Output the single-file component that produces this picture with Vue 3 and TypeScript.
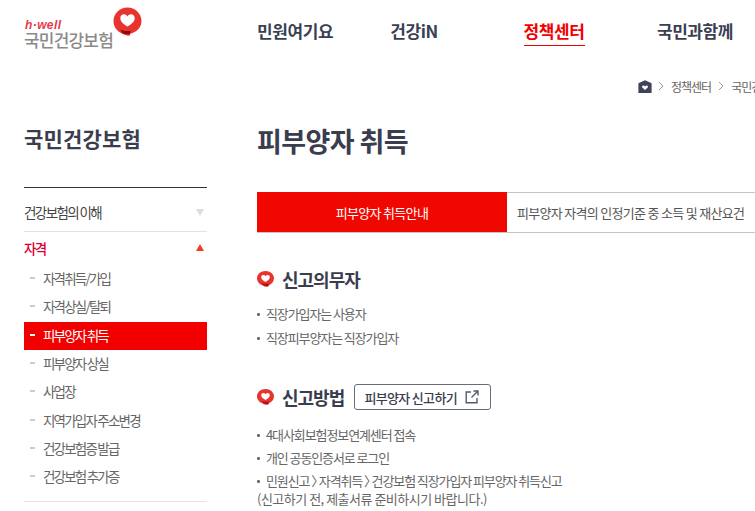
<script setup lang="ts">
const nav = [
  { label: '민원여기요', active: false },
  { label: '건강iN', active: false },
  { label: '정책센터', active: true },
  { label: '국민과함께', active: false },
]
const subs = [
  { label: '자격취득/가입', active: false },
  { label: '자격상실/탈퇴', active: false },
  { label: '피부양자 취득', active: true },
  { label: '피부양자 상실', active: false },
  { label: '사업장', active: false },
  { label: '지역가입자 주소변경', active: false },
  { label: '건강보험증 발급', active: false },
  { label: '건강보험 추가증', active: false },
]
const duty = ['직장가입자는 사용자', '직장피부양자는 직장가입자']
const how = ['4대사회보험정보연계센터 접속', '개인 공동인증서로 로그인']
</script>

<template>
  <div class="page">
    <header class="header">
      <div class="logo">
        <div class="logo-words">
          <span class="logo-en">h·well</span>
          <span class="logo-ko">국민건강보험</span>
        </div>
        <svg class="logo-mark" width="29" height="29" viewBox="0 0 29 29">
          <path d="M14.5 .5C6.800 .5.500 6.500.500 14c0 5.500 3.200 10 8 12.300 2 1.500 6 2.500 8.300 2.300l.3-1.900C23.700 25.500 28.500 20.500 28.500 14 28.500 6.500 22.200 .5 14.500 .5Z" fill="#e8342f"/>
          <path d="M7.500 22.500c3 1.500 6.500 1.800 10 1.300l-.4 3.400c-2.700.2-5.300-.1-8.100-1.300Z" fill="#8f0a0a"/>
          <path d="M14.500 19.500c-3.200-2-7.200-4.500-7.200-8.300 0-2.300 1.700-3.900 3.700-3.900 1.500 0 2.700.8 3.500 2.100.8-1.300 2-2.100 3.500-2.100 2 0 3.700 1.600 3.700 3.900 0 3.800-4 6.300-7.200 8.300Z" fill="#fff"/>
        </svg>
      </div>
      <nav class="nav">
        <div v-for="n in nav" :key="n.label" class="nav-item">
          <span class="nav-label" :class="{ on: n.active }">{{ n.label }}</span>
        </div>
      </nav>
    </header>

    <div class="crumbs">
      <svg class="home" width="14" height="13" viewBox="0 0 14 13">
        <path d="M7 .3 13.600 3.300V13H.4V3.300Z" fill="#3f4357"/>
        <path d="M7 10 4.300 7.600c-.8-1 0-2.200 1.100-2.100.7 0 1.200.4 1.600 1 .4-.6.900-1 1.600-1 1.100-.1 1.900 1.100 1.100 2.100Z" fill="#fff"/>
      </svg>
      <svg class="chev" width="6" height="10" viewBox="0 0 6 10"><path d="M1 1l4 4-4 4" fill="none" stroke="#999" /></svg>
      <span class="crumb">정책센터</span>
      <svg class="chev" width="6" height="10" viewBox="0 0 6 10"><path d="M1 1l4 4-4 4" fill="none" stroke="#999" /></svg>
      <span class="crumb">국민건강보험</span>
    </div>

    <div class="body">
      <aside class="side">
        <h2 class="side-title">국민건강보험</h2>
        <div class="menu-row first">
          <span>건강보험의 이해</span>
          <i class="tri down"></i>
        </div>
        <div class="menu-row open">
          <span>자격</span>
          <i class="tri up"></i>
        </div>
        <ul class="subs">
          <li v-for="s in subs" :key="s.label" class="sub" :class="{ on: s.active }">
            <i class="dash"></i><span>{{ s.label }}</span>
          </li>
        </ul>
      </aside>

      <main class="main">
        <h1 class="title">피부양자 취득</h1>
        <div class="tabs">
          <div class="tab on">피부양자 취득안내</div>
          <div class="tab">피부양자 자격의 인정기준 중 소득 및 재산요건</div>
        </div>

        <section class="sec duty">
          <div class="sec-head">
            <svg class="bullet" width="17" height="16" viewBox="0 0 17 16">
              <path d="M8.500 0C3.800 0 0 3.200 0 7.200c0 3.300 2.200 6 5.300 7 1.500 1.300 4.500 2 6 1.500l.1-1.400C14.600 13.300 17 10.500 17 7.200 17 3.200 13.200 0 8.500 0Z" fill="#e8342f"/>
              <path d="M4.500 12c2.200.9 5 1.100 7.300.6l-.3 2.300c-2 .2-3.900-.2-5.600-1.200Z" fill="#a51010"/>
              <path d="M8.500 11C6.500 9.800 4.200 8.400 4.200 6.300c0-1.400 1-2.300 2.200-2.300.9 0 1.600.5 2.100 1.200.5-.7 1.200-1.200 2.100-1.200 1.200 0 2.200.9 2.200 2.300 0 2.100-2.300 3.500-4.300 4.700Z" fill="#fff"/>
            </svg>
            <h3>신고의무자</h3>
          </div>
          <ul class="list">
            <li v-for="d in duty" :key="d">{{ d }}</li>
          </ul>
        </section>

        <section class="sec how">
          <div class="sec-head">
            <svg class="bullet" width="17" height="16" viewBox="0 0 17 16">
              <path d="M8.500 0C3.800 0 0 3.200 0 7.200c0 3.300 2.200 6 5.300 7 1.500 1.300 4.500 2 6 1.500l.1-1.400C14.600 13.300 17 10.500 17 7.200 17 3.200 13.200 0 8.500 0Z" fill="#e8342f"/>
              <path d="M4.500 12c2.200.9 5 1.100 7.300.6l-.3 2.300c-2 .2-3.900-.2-5.600-1.200Z" fill="#a51010"/>
              <path d="M8.500 11C6.500 9.800 4.200 8.400 4.200 6.300c0-1.400 1-2.300 2.200-2.300.9 0 1.600.5 2.100 1.200.5-.7 1.200-1.200 2.100-1.200 1.200 0 2.200.9 2.200 2.300 0 2.100-2.300 3.500-4.300 4.700Z" fill="#fff"/>
            </svg>
            <h3>신고방법</h3>
            <button class="link-btn">
              피부양자 신고하기
              <svg width="14" height="14" viewBox="0 0 14 14" fill="none" stroke="#555a6b" stroke-width="1.400">
                <path d="M6 2H1.200v10.800H12V8"/>
                <path d="M8.500 1H13v4.500M13 1 6.500 7.500"/>
              </svg>
            </button>
          </div>
          <ul class="list">
            <li v-for="h in how" :key="h">{{ h }}</li>
            <li>민원신고 <span class="gt">〉</span>자격취득 <span class="gt">〉</span>건강보험 직장가입자 피부양자 취득신고<br /><span class="note">(신고하기 전, 제출서류 준비하시기 바랍니다.)</span></li>
          </ul>
        </section>
      </main>
    </div>
  </div>
</template>

<style>
html, body { margin: 0; background: #fff; overflow: hidden; }
</style>

<style scoped>
.page {
  width: 755px;
  height: 511px;
  overflow: hidden;
  font-family: "Noto Sans CJK KR", "Noto Sans", sans-serif;
  color: #3a3d4e;
}
.header { display: flex; height: 73px; }
.logo { width: 257px; flex: none; position: relative; padding: 19px 0 0 24px; box-sizing: border-box; }
.logo-words { display: flex; flex-direction: column; }
.logo-en { font: italic 700 12px/12px "Liberation Sans", sans-serif; color: #e8394a; padding-left: 1px; letter-spacing: .4px; }
.logo-ko { font-size: 17px; line-height: 17px; color: #8a8a8a; font-weight: 500; letter-spacing: -.8px; white-space: nowrap; }
.logo-mark { position: absolute; left: 113px; top: 7px; }
.nav { display: flex; padding-top: 17px; }
.nav-item { width: 133.3px; }
.nav-label { display: inline-block; font-size: 17px; line-height: 27px; font-weight: 700; color: #3b3f52; letter-spacing: -.4px; height: 28px; }
.nav-label.on { color: #f00000; border-bottom: 1.5px solid #f00000; }
.crumbs { display: flex; align-items: center; height: 26px; padding-left: 638px; white-space: nowrap; font-size: 12px; color: #666; letter-spacing: -1px; }
.home { flex: none; margin-right: 6px; }
.chev { flex: none; margin-right: 7px; }
.crumb { margin-right: 7px; }
.body { display: flex; padding-left: 24px; }
.side { width: 183px; flex: none; margin-right: 50px; }
.side-title { margin: 23px 0 33px; font-size: 21px; line-height: 32px; font-weight: 700; color: #3a3d4e; letter-spacing: .2px; white-space: nowrap; }
.menu-row { display: flex; justify-content: space-between; align-items: center; font-size: 13.500px; letter-spacing: -1.600px; color: #444; }
.menu-row.first { height: 45px; padding-top: 5px; border-top: 1px solid #333; border-bottom: 1px solid #e3e3e3; box-sizing: border-box; }
.menu-row.open { height: 33px; padding-bottom: 2px; box-sizing: border-box; color: #dc0030; font-weight: 500; }
.tri { width: 0; height: 0; border-left: 4.500px solid transparent; border-right: 4.500px solid transparent; margin-right: 3px; }
.tri.down { border-top: 7px solid #ddd; }
.tri.up { border-bottom: 7px solid #f53a24; }
.subs { list-style: none; margin: 0; padding: 0 0 10px; border-bottom: 1px solid #e3e3e3; }
.sub { height: 28.300px; padding-bottom: 2px; box-sizing: border-box; display: flex; align-items: center; font-size: 13.500px; letter-spacing: -1.800px; color: #666; white-space: nowrap; }
.dash { width: 5px; height: 2px; background: #ccc; margin: 0 8px 0 6px; flex: none; }
.sub.on { background: #f20000; color: #fff; }
.sub.on .dash { background: #fff; }
.main { width: 498px; flex: none; }
.title { margin: 23px 0 32px; font-size: 27px; line-height: 38px; font-weight: 700; color: #3a3d4e; letter-spacing: -.6px; }
.tabs { display: flex; width: 560px; height: 41px; box-sizing: border-box; border-top: 1px solid #c4c5cb; border-bottom: 1px solid #c4c5cb; }
.tab { font-size: 13px; letter-spacing: -.7px; display: flex; align-items: center; padding-left: 10px; color: #555; white-space: nowrap; }
.tab.on { width: 250px; flex: none; justify-content: center; padding: 0; margin: -1px 0 0; background: #f00800; color: #fff; }
.sec-head { display: flex; align-items: center; height: 28px; }
.bullet { flex: none; margin-right: 8px; }
.sec-head h3 { margin: 0; font-size: 18px; font-weight: 700; color: #3a3d4e; letter-spacing: -1px; white-space: nowrap; }
.duty { margin-top: 32px; }
.how { margin-top: 36px; }
.list { list-style: none; margin: 0; padding: 0; font-size: 13px; letter-spacing: -1.100px; color: #666; line-height: 18px; }
.duty .list { margin-top: 12px; }
.how .list { margin-top: 15px; }
.list li { position: relative; padding-left: 9px; margin-bottom: 6px; white-space: nowrap; }
.how .list li { margin-bottom: 5px; }
.list li::before { content: ""; position: absolute; left: 0; top: 8px; width: 2.500px; height: 2.500px; border-radius: 50%; background: #666; }
.gt { letter-spacing: -5px; margin-right: -.5px; }
.note { margin-left: -9px; letter-spacing: -.5px; }
.link-btn { margin-left: 10px; height: 26px; width: 137px; padding: 0 2px 0 0; box-sizing: border-box; border: 1px solid #666c7c; border-radius: 3px; background: #fff; font: 500 13px "Noto Sans CJK KR", sans-serif; letter-spacing: -.7px; color: #3a3d4e; display: flex; align-items: center; justify-content: center; gap: 8px; white-space: nowrap; }
</style>
